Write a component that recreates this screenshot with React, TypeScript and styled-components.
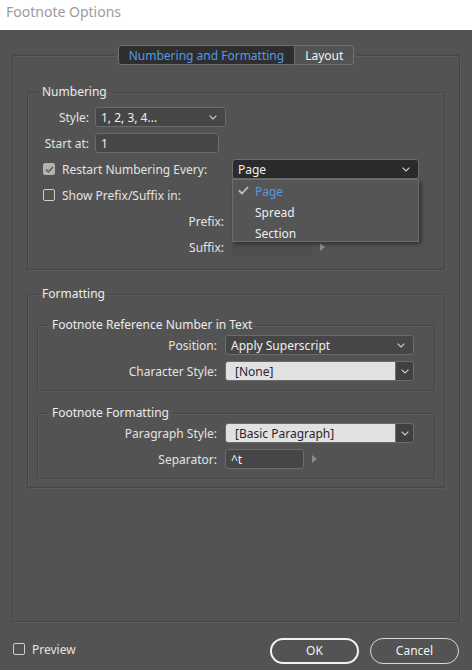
import styled, { createGlobalStyle, css } from 'styled-components';

const GlobalStyle = createGlobalStyle`
  html, body { margin: 0; padding: 0; background: #535353; }
  body {
    font-family: "Noto Sans", "Open Sans", sans-serif;
    font-size: 12px;
    color: #e2e2e2;
  }
  #root { width: 472px; height: 670px; background: #535353; overflow: hidden; }
`;

const TitleBar = styled.div`
  height: 30px;
  background: #ffffff;
  color: #9b9b9b;
  font-size: 14px;
  line-height: 24px;
  padding-left: 6px;
  box-sizing: border-box;
`;

const groupBorder = css`
  margin: 0;
  border: 1px solid #454545;
  border-radius: 2px;
  box-shadow: 1px 1px 0 #5c5c5c, inset 1px 1px 0 #5c5c5c;
  min-width: 0;
`;

const Panel = styled.fieldset`
  ${groupBorder};
  margin: 15px 12px 0 12px;
  padding: 19px 14px 133px 14px;
`;

const TabLegend = styled.legend`
  margin: 0 auto;
  padding: 0 3px;
`;

const TabBar = styled.div`
  display: flex;
`;

const Tab = styled.div<{ $active?: boolean }>`
  height: 20px;
  box-sizing: border-box;
  display: flex;
  align-items: center;
  padding: 0 10px;
  border: 1px solid #6f6f6f;
  background: ${p => (p.$active ? '#2e2e2e' : '#535353')};
  color: ${p => (p.$active ? '#4f9be4' : '#f2f2f2')};
  &:first-child { border-radius: 3px 0 0 3px; }
  &:last-child { border-radius: 0 3px 3px 0; border-left: none; }
`;

const Section = styled.fieldset<{ $top?: number }>`
  ${groupBorder};
  margin-top: ${p => p.$top ?? 0}px;
  padding: 7px 0 12px 0;
`;

const FormatSection = styled(Section)`
  padding: 15px 0 8px 0;
`;

const SubSection = styled.fieldset<{ $top?: number }>`
  ${groupBorder};
  margin: ${p => p.$top ?? 0}px 9px 0 9px;
  padding: 2px 0 9px 0;
`;

const Legend = styled.legend`
  margin-left: 10px;
  padding: 0 4px;
  line-height: 16px;
  color: #ececec;
`;

const Rows = styled.div`
  display: flex;
  flex-direction: column;
  gap: 6px;
`;

const Row = styled.div<{ $indent?: number; $gap?: number }>`
  display: flex;
  align-items: center;
  height: 20px;
  padding-left: ${p => p.$indent ?? 0}px;
  gap: ${p => p.$gap ?? 6}px;
`;

const Label = styled.span<{ $width: number }>`
  width: ${p => p.$width}px;
  text-align: right;
  white-space: nowrap;
  flex-shrink: 0;
`;

const CheckLabel = styled.span<{ $width?: number }>`
  display: flex;
  align-items: center;
  gap: 7px;
  white-space: nowrap;
  ${p => p.$width && `width: ${p.$width}px;`}
`;

const Box = styled.span<{ $checked?: boolean }>`
  width: 12px;
  height: 12px;
  box-sizing: border-box;
  border-radius: 2px;
  border: 1px solid ${p => (p.$checked ? '#b3b3b3' : '#cfcfcf')};
  background: ${p => (p.$checked ? '#b3b3b3' : 'transparent')};
  display: flex;
  align-items: center;
  justify-content: center;
  flex-shrink: 0;
`;

const Select = styled.div<{ $width: number; $dark?: boolean }>`
  position: relative;
  width: ${p => p.$width}px;
  height: 20px;
  box-sizing: border-box;
  border: 1px solid #6c6c6c;
  border-radius: 3px;
  background: ${p => (p.$dark ? '#2b2b2b' : '#464646')};
  color: #f0f0f0;
  display: flex;
  align-items: center;
  justify-content: space-between;
  padding: 0 8px 0 5px;
  white-space: nowrap;
`;

const Combo = styled.div<{ $width: number }>`
  width: ${p => p.$width}px;
  height: 20px;
  box-sizing: border-box;
  border: 1px solid #6c6c6c;
  border-radius: 3px;
  display: flex;
  overflow: hidden;
`;

const ComboField = styled.div`
  flex: 1;
  background: #e1e1e1;
  color: #2c2433;
  display: flex;
  align-items: center;
  padding-left: 9px;
`;

const ComboButton = styled.div`
  width: 17px;
  background: #404040;
  border-left: 1px solid #6c6c6c;
  display: flex;
  align-items: center;
  justify-content: center;
`;

const TextInput = styled.div<{ $width: number; $disabled?: boolean }>`
  width: ${p => p.$width}px;
  height: 20px;
  box-sizing: border-box;
  border: 1px solid ${p => (p.$disabled ? '#4f4f4f' : '#6c6c6c')};
  border-radius: 3px;
  background: ${p => (p.$disabled ? '#4f4f4f' : '#464646')};
  color: #f0f0f0;
  display: flex;
  align-items: center;
  padding-left: 5px;
`;

const Menu = styled.div`
  position: absolute;
  top: 19px;
  left: -1px;
  width: 187px;
  height: 63px;
  box-sizing: border-box;
  background: #555555;
  border: 1px solid #6e6e6e;
  box-shadow: 2px 2px 4px rgba(0, 0, 0, 0.45);
  z-index: 2;
  padding-top: 1px;
`;

const MenuItem = styled.div<{ $selected?: boolean }>`
  position: relative;
  height: 21px;
  display: flex;
  align-items: center;
  padding-left: 22px;
  color: ${p => (p.$selected ? '#4f9be4' : '#eeeeee')};
`;

const MenuCheck = styled.svg`
  position: absolute;
  left: 5px;
  top: 5px;
`;

const Footer = styled.div`
  display: flex;
  align-items: center;
  padding: 0 13px;
  margin-top: 14px;
  height: 26px;
`;

const Buttons = styled.div`
  margin-left: auto;
  display: flex;
  gap: 11px;
  padding-top: 3px;
`;

const Button = styled.div<{ $primary?: boolean }>`
  width: 89px;
  height: 26px;
  box-sizing: border-box;
  border-radius: 13px;
  border: ${p => (p.$primary ? '2px solid #f2f2f2' : '1px solid #d9d9d9')};
  color: #f2f2f2;
  display: flex;
  align-items: center;
  justify-content: center;
`;

const Chevron = () => (
  <svg width="8" height="5" viewBox="0 0 8 5">
    <path d="M0.6 0.6 L4 4 L7.4 0.6" fill="none" stroke="#cfcfcf" strokeWidth="1.1" />
  </svg>
);

const Arrow = () => (
  <svg width="5" height="8" viewBox="0 0 5 8">
    <path d="M0 0 L5 4 L0 8 Z" fill="#8c8c8c" />
  </svg>
);

const CheckBox = ({ checked }: { checked?: boolean }) => (
  <Box $checked={checked}>
    {checked && (
      <svg width="9" height="7" viewBox="0 0 9 7">
        <path d="M1 3.5 L3.4 5.8 L8 1" fill="none" stroke="#5d5d5d" strokeWidth="1.6" />
      </svg>
    )}
  </Box>
);

export default function App() {
  return (
    <>
      <GlobalStyle />
      <TitleBar>Footnote Options</TitleBar>
      <Panel>
        <TabLegend>
          <TabBar>
            <Tab $active>Numbering and Formatting</Tab>
            <Tab>Layout</Tab>
          </TabBar>
        </TabLegend>

        <Section>
          <Legend>Numbering</Legend>
          <Rows>
            <Row>
              <Label $width={61}>Style:</Label>
              <Select $width={131}>1, 2, 3, 4...<Chevron /></Select>
            </Row>
            <Row>
              <Label $width={61}>Start at:</Label>
              <TextInput $width={124}>1</TextInput>
            </Row>
            <Row $indent={15} $gap={0}>
              <CheckLabel $width={189}>
                <CheckBox checked />
                Restart Numbering Every:
              </CheckLabel>
              <Select $width={187} $dark>
                Page
                <Chevron />
                <Menu>
                  <MenuItem $selected>
                    <MenuCheck width="11" height="9" viewBox="0 0 11 9">
                      <path d="M1 4.5 L4 7.5 L10 1" fill="none" stroke="#c4c4c4" strokeWidth="1.8" />
                    </MenuCheck>
                    Page
                  </MenuItem>
                  <MenuItem>Spread</MenuItem>
                  <MenuItem>Section</MenuItem>
                </Menu>
              </Select>
            </Row>
            <Row $indent={15}>
              <CheckLabel>
                <CheckBox />
                Show Prefix/Suffix in:
              </CheckLabel>
            </Row>
            <Row $gap={8}>
              <Label $width={196}>Prefix:</Label>
              <TextInput $width={80} $disabled />
            </Row>
            <Row $gap={8}>
              <Label $width={196}>Suffix:</Label>
              <TextInput $width={80} $disabled />
              <Arrow />
            </Row>
          </Rows>
        </Section>

        <FormatSection $top={16}>
          <Legend>Formatting</Legend>
          <SubSection>
            <Legend>Footnote Reference Number in Text</Legend>
            <Rows>
              <Row $gap={8}>
                <Label $width={179}>Position:</Label>
                <Select $width={189}>Apply Superscript<Chevron /></Select>
              </Row>
              <Row $gap={8}>
                <Label $width={179}>Character Style:</Label>
                <Combo $width={189}>
                  <ComboField>[None]</ComboField>
                  <ComboButton><Chevron /></ComboButton>
                </Combo>
              </Row>
            </Rows>
          </SubSection>
          <SubSection $top={14}>
            <Legend>Footnote Formatting</Legend>
            <Rows>
              <Row $gap={8}>
                <Label $width={179}>Paragraph Style:</Label>
                <Combo $width={189}>
                  <ComboField>[Basic Paragraph]</ComboField>
                  <ComboButton><Chevron /></ComboButton>
                </Combo>
              </Row>
              <Row $gap={8}>
                <Label $width={179}>Separator:</Label>
                <TextInput $width={79}>^t</TextInput>
                <Arrow />
              </Row>
            </Rows>
          </SubSection>
        </FormatSection>
      </Panel>

      <Footer>
        <CheckLabel>
          <CheckBox />
          Preview
        </CheckLabel>
        <Buttons>
          <Button $primary>OK</Button>
          <Button>Cancel</Button>
        </Buttons>
      </Footer>
    </>
  );
}
